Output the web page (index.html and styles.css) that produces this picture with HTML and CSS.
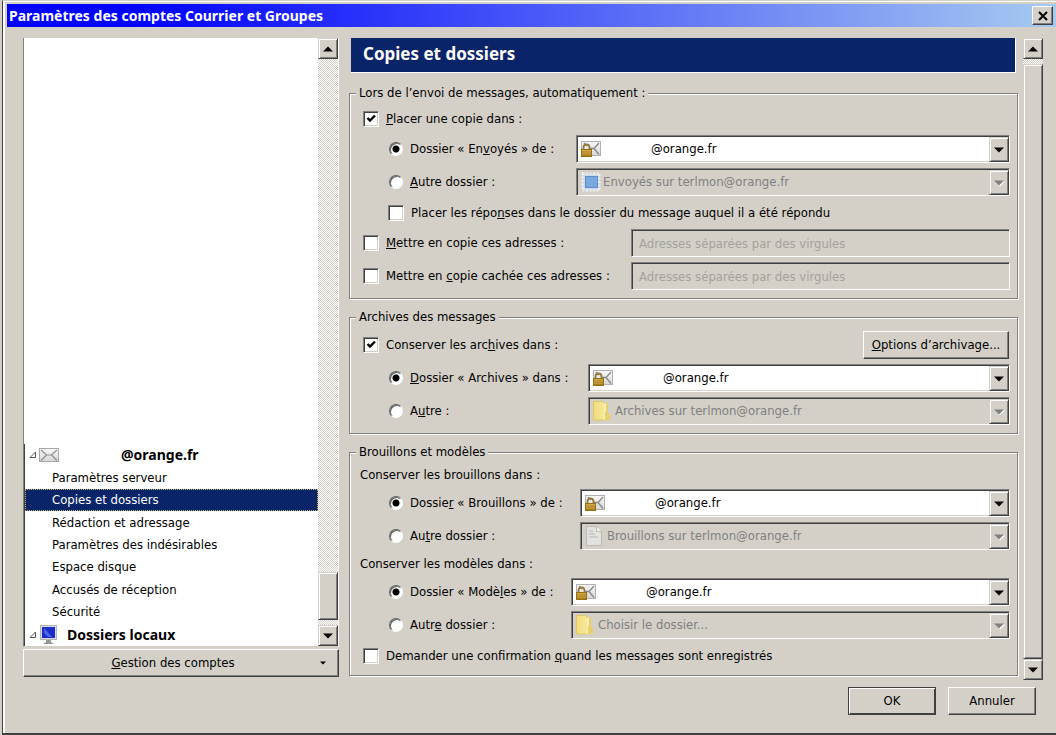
FILE: index.html
```html
<!DOCTYPE html>
<html lang="fr">
<head>
    <meta charset="UTF-8">
    <meta name="viewport" content="width=device-width, initial-scale=1.0">
    <title>Paramètres des comptes Courrier et Groupes</title>
    <link rel="stylesheet" href="styles.css">
</head>
<body>
    <!-- icônes partagées -->
    <svg class="sprite" aria-hidden="true">
        <linearGradient id="paper" x1="0" y1="0" x2="0" y2="1">
            <stop offset="0" stop-color="#f8f8f8"/>
            <stop offset="1" stop-color="#d6d6d6"/>
        </linearGradient>
        <linearGradient id="gold" x1="0" y1="0" x2="0" y2="1">
            <stop offset="0" stop-color="#d8b050"/>
            <stop offset="1" stop-color="#a07418"/>
        </linearGradient>
        <linearGradient id="folder" x1="0" y1="0" x2="1" y2="0">
            <stop offset="0" stop-color="#f0dc7c"/>
            <stop offset="1" stop-color="#f7e89c"/>
        </linearGradient>
        <symbol id="i-mail" viewBox="0 0 20 20">
            <rect x="0.5" y="3.5" width="19" height="13" fill="url(#paper)" stroke="#a8a8a8"/>
            <path d="M2 5l5.500 5h5L18 5M2 15.500l5.500-5.500M18 15.500L12.500 10" fill="none" stroke="#909090" stroke-width="1.200"/>
        </symbol>
        <symbol id="i-lock" viewBox="0 0 20 20">
            <rect x="0.500" y="2.500" width="19" height="14" fill="url(#paper)" stroke="#b0b0b0"/>
            <path d="M18 4l-5 5.500 5 6M13 9.500H9M3 4l3 3" fill="none" stroke="#888" stroke-width="1.300"/>
            <path d="M2.500 11V8.500a3 3 0 0 1 6 0V11" fill="none" stroke="#94783c" stroke-width="1.800"/>
            <rect x="0.500" y="10.500" width="10" height="7" fill="url(#gold)" stroke="#94700f"/>
            <path d="M1 12.500h9M1 15.500h9" stroke="#c0943a"/>
        </symbol>
        <symbol id="i-stamp" viewBox="0 0 20 20">
            <rect x="1.500" y="1.500" width="17" height="17" fill="#d5dbe2" stroke="#eef0f2" stroke-width="2" stroke-dasharray="2 1.500"/>
            <rect x="4.500" y="4.500" width="12" height="11" fill="#79a8df" stroke="#5b8fd0"/>
        </symbol>
        <symbol id="i-folder" viewBox="0 0 20 20">
            <path d="M11 2h4v9l2 3v5h-6z" fill="#e8d06a"/>
            <path d="M0.500 0.500h9l2 2V19h-11z" fill="url(#folder)" stroke="#e0c864"/>
            <path d="M12.500 2v9M11.500 3v16" stroke="#f8eeb0"/>
        </symbol>
        <symbol id="i-page" viewBox="0 0 20 20">
            <path d="M1.500 0.500h10l5 5v14h-15z" fill="#e3e2df" stroke="#bcbab6"/>
            <path d="M11.500 0.500v5h5" fill="#f3f3f1" stroke="#bcbab6"/>
            <path d="M4 5h4M4 8h6M4 11h9" stroke="#b8b6b2"/>
        </symbol>
        <symbol id="i-screen" viewBox="0 0 20 20">
            <rect x="1.500" y="0.500" width="16" height="14" fill="#d8dce4" stroke="#b0b4bc"/>
            <rect x="3" y="2" width="13" height="11" fill="#1c2cc8"/>
            <path d="M5 3l8 9h-4L5 8z" fill="#4c66e8"/>
            <path d="M7 15h5v2l3 2H4l3-2z" fill="#94989e"/>
        </symbol>
        <symbol id="i-twisty" viewBox="0 0 8 8">
            <path d="M6.500 1v5.500H1z" fill="none" stroke="#555"/>
        </symbol>
        <symbol id="i-up" viewBox="0 0 10 6"><path d="M0 5.500h10L5 0.500z"/></symbol>
        <symbol id="i-down" viewBox="0 0 10 6"><path d="M0 0.500h10L5 5.500z"/></symbol>
    </svg>

    <div class="dialog">
        <header class="titlebar">
            <h1>Paramètres des comptes Courrier et Groupes</h1>
            <button class="close" aria-label="Fermer">
                <svg viewBox="0 0 10 10"><path d="M1 1l8 8M9 1L1 9" stroke="#000" stroke-width="2"/></svg>
            </button>
        </header>

        <main class="content">
            <aside class="accounts">
                <div class="tree-box">
                    <ul class="tree">
                        <li class="account">
                            <svg class="twisty"><use href="#i-twisty"/></svg>
                            <svg class="icon"><use href="#i-mail"/></svg>
                            <span class="address">@orange.fr</span>
                        </li>
                        <li>Paramètres serveur</li>
                        <li class="selected">Copies et dossiers</li>
                        <li>Rédaction et adressage</li>
                        <li>Paramètres des indésirables</li>
                        <li>Espace disque</li>
                        <li>Accusés de réception</li>
                        <li>Sécurité</li>
                        <li class="account">
                            <svg class="twisty"><use href="#i-twisty"/></svg>
                            <svg class="icon"><use href="#i-screen"/></svg>
                            <span class="local">Dossiers locaux</span>
                        </li>
                    </ul>
                    <div class="scrollbar">
                        <button class="arrow" aria-label="Haut"><svg><use href="#i-up"/></svg></button>
                        <div class="track"></div>
                        <div class="thumb"></div>
                        <div class="track-end"></div>
                        <button class="arrow" aria-label="Bas"><svg><use href="#i-down"/></svg></button>
                    </div>
                </div>
                <button class="btn manage"><span><u>G</u>estion des comptes</span><svg class="caret"><use href="#i-down"/></svg></button>
            </aside>

            <section class="pane">
                <div class="settings">
                    <h2>Copies et dossiers</h2>

                    <fieldset>
                        <legend>Lors de l’envoi de messages, automatiquement :</legend>
                        <label class="check"><input type="checkbox" checked><span><u>P</u>lacer une copie dans :</span></label>
                        <div class="choices sent">
                            <label class="radio"><input type="radio" name="sent" checked><span>Dossier « En<u>v</u>oyés » de :</span></label>
                            <div class="combo">
                                <svg class="icon"><use href="#i-lock"/></svg>
                                <select aria-label="Compte des envoyés"><option>@orange.fr</option></select>
                                <span class="drop"><svg><use href="#i-down"/></svg></span>
                            </div>
                            <label class="radio"><input type="radio" name="sent"><span><u>A</u>utre dossier :</span></label>
                            <div class="combo off">
                                <svg class="icon"><use href="#i-stamp"/></svg>
                                <select aria-label="Dossier des envoyés" disabled><option>Envoyés sur terlmon@orange.fr</option></select>
                                <span class="drop"><svg><use href="#i-down"/></svg></span>
                            </div>
                        </div>
                        <label class="check nested"><input type="checkbox"><span>Placer les répo<u>n</u>ses dans le dossier du message auquel il a été répondu</span></label>
                        <div class="copies">
                            <label class="check"><input type="checkbox"><span><u>M</u>ettre en copie ces adresses :</span></label>
                            <input class="field" type="text" aria-label="Adresses en copie" placeholder="Adresses séparées par des virgules" disabled>
                            <label class="check"><input type="checkbox"><span>Mettre en <u>c</u>opie cachée ces adresses :</span></label>
                            <input class="field" type="text" aria-label="Adresses en copie cachée" placeholder="Adresses séparées par des virgules" disabled>
                        </div>
                    </fieldset>

                    <fieldset>
                        <legend>Archives des messages</legend>
                        <div class="split">
                            <label class="check"><input type="checkbox" checked><span>Conserver les arc<u>h</u>ives dans :</span></label>
                            <button class="btn options"><span><u>O</u>ptions d’archivage...</span></button>
                        </div>
                        <div class="choices archive">
                            <label class="radio"><input type="radio" name="archive" checked><span><u>D</u>ossier « Archives » dans :</span></label>
                            <div class="combo">
                                <svg class="icon"><use href="#i-lock"/></svg>
                                <select aria-label="Compte des archives"><option>@orange.fr</option></select>
                                <span class="drop"><svg><use href="#i-down"/></svg></span>
                            </div>
                            <label class="radio"><input type="radio" name="archive"><span>A<u>u</u>tre :</span></label>
                            <div class="combo off">
                                <svg class="icon"><use href="#i-folder"/></svg>
                                <select aria-label="Dossier des archives" disabled><option>Archives sur terlmon@orange.fr</option></select>
                                <span class="drop"><svg><use href="#i-down"/></svg></span>
                            </div>
                        </div>
                    </fieldset>

                    <fieldset>
                        <legend>Brouillons et modèles</legend>
                        <p>Conserver les brouillons dans :</p>
                        <div class="choices drafts">
                            <label class="radio"><input type="radio" name="drafts" checked><span>Dossie<u>r</u> « Brouillons » de :</span></label>
                            <div class="combo">
                                <svg class="icon"><use href="#i-lock"/></svg>
                                <select aria-label="Compte des brouillons"><option>@orange.fr</option></select>
                                <span class="drop"><svg><use href="#i-down"/></svg></span>
                            </div>
                            <label class="radio"><input type="radio" name="drafts"><span>Au<u>t</u>re dossier :</span></label>
                            <div class="combo off">
                                <svg class="icon"><use href="#i-page"/></svg>
                                <select aria-label="Dossier des brouillons" disabled><option>Brouillons sur terlmon@orange.fr</option></select>
                                <span class="drop"><svg><use href="#i-down"/></svg></span>
                            </div>
                        </div>
                        <p>Conserver les modèles dans :</p>
                        <div class="choices templates">
                            <label class="radio"><input type="radio" name="templates" checked><span>Dossier « Modè<u>l</u>es » de :</span></label>
                            <div class="combo">
                                <svg class="icon"><use href="#i-lock"/></svg>
                                <select aria-label="Compte des modèles"><option>@orange.fr</option></select>
                                <span class="drop"><svg><use href="#i-down"/></svg></span>
                            </div>
                            <label class="radio"><input type="radio" name="templates"><span>Autr<u>e</u> dossier :</span></label>
                            <div class="combo off">
                                <svg class="icon"><use href="#i-folder"/></svg>
                                <select aria-label="Dossier des modèles" disabled><option>Choisir le dossier...</option></select>
                                <span class="drop"><svg><use href="#i-down"/></svg></span>
                            </div>
                        </div>
                        <label class="check"><input type="checkbox"><span>Demander une confirmation <u>q</u>uand les messages sont enregistrés</span></label>
                    </fieldset>
                </div>
                <div class="scrollbar">
                    <button class="arrow" aria-label="Haut"><svg><use href="#i-up"/></svg></button>
                    <div class="track-end"></div>
                    <div class="thumb full"></div>
                    <button class="arrow" aria-label="Bas"><svg><use href="#i-down"/></svg></button>
                </div>
            </section>
        </main>

        <footer class="actions">
            <button class="btn default">OK</button>
            <button class="btn">Annuler</button>
        </footer>
    </div>
</body>
</html>
```
FILE: styles.css
```css
* {
    box-sizing: border-box;
}

body {
    margin: 0;
    background: #d4d0c8;
    color: #000;
    font-family: "DejaVu Sans Condensed", "Noto Sans", sans-serif;
    font-size: 13px;
    line-height: 18px;
}

button, input, select {
    font: inherit;
    color: inherit;
    margin: 0;
}

.sprite {
    position: absolute;
    width: 0;
    height: 0;
}

.dialog {
    display: flex;
    flex-direction: column;
    min-height: 100vh;
    margin-left: 2px;
    padding: 3px 0 16px 3px;
    border: solid #404040;
    border-width: 0 0 2px 1px;
    border-top: 1px solid #d4d0c8;
    box-shadow: inset 2px 1px #fff;
}

/* barre de titre */
.titlebar {
    display: flex;
    align-items: center;
    height: 23px;
    margin-left: 1px;
    padding: 0 3px 0 2px;
    background: linear-gradient(to right, #0000ff 12%, #a6caf0);
    color: #fff;
}

h1, h2, .account {
    font-family: "Noto Sans", sans-serif;
    font-weight: bold;
}

.titlebar h1 {
    flex: 1;
    margin: 0;
    font-size: 14px;
}

.close {
    width: 21px;
    height: 19px;
    padding: 0;
    display: flex;
    align-items: center;
    justify-content: center;
    background: #d4d0c8;
    border: 1px solid;
    border-color: #fff #404040 #404040 #fff;
    box-shadow: inset -1px -1px #808080;
}

.close svg {
    width: 10px;
    height: 10px;
}

.content {
    display: flex;
    gap: 10px;
    padding: 11px 13px 0 17px;
}

/* liste des comptes */
.accounts {
    display: flex;
    flex-direction: column;
    gap: 2px;
    flex: 0 0 316px;
    padding-bottom: 3px;
}

.tree-box {
    flex: 1;
    display: flex;
    background: #fff;
    border-left: 1px solid #808080;
    border-right: 1px solid #fff;
    border-bottom: 1px solid #d4d0c8;
}

.tree {
    flex: 1;
    align-self: flex-end;
    display: flex;
    flex-direction: column;
    height: 202px;
    margin: 0;
    padding: 0;
    list-style: none;
    border-left: 1px solid #404040;
}

.tree li {
    flex: 1;
    display: flex;
    align-items: center;
    padding-left: 27px;
}

.tree .account {
    padding-left: 4px;
    font-size: 14px;
}

.tree .selected {
    background: #0a246a;
    color: #fff;
    outline: 1px dotted #c8b46c;
    outline-offset: -1px;
}

.twisty {
    width: 8px;
    height: 8px;
    margin-right: 2px;
}

.icon {
    flex: none;
    width: 20px;
    height: 20px;
}

.address {
    margin-left: 62px;
}

.local {
    margin-left: 8px;
}

.manage {
    position: relative;
}

.manage span {
    padding-right: 16px;
}

.caret {
    position: absolute;
    right: 12px;
    top: 11px;
    width: 6px;
    height: 4px;
}

/* barres de défilement */
.scrollbar {
    display: flex;
    flex-direction: column;
    flex: none;
    width: 20px;
    background: repeating-conic-gradient(#fff 0 25%, #d4d0c8 0 50%) 0 0 / 2px 2px;
}

.arrow, .drop, .thumb {
    flex: none;
    background: #d4d0c8;
    border: 1px solid;
    border-color: #d4d0c8 #404040 #404040 #d4d0c8;
    box-shadow: inset 1px 1px #fff, inset -1px -1px #808080;
}

.arrow {
    display: flex;
    align-items: center;
    justify-content: center;
    height: 21px;
    padding: 0;
}

.arrow svg, .drop svg {
    width: 10px;
    height: 6px;
}

.track {
    flex: 1;
}

.thumb {
    height: 48px;
}

.thumb.full {
    flex: 1;
}

.track-end {
    height: 5px;
}

/* panneau de droite */
.pane {
    flex: 1;
    display: flex;
    gap: 5px;
    min-width: 0;
}

.settings {
    flex: 1;
    min-width: 0;
    padding-bottom: 4px;
}

.settings h2 {
    margin: 0 2px 11px;
    padding: 5px 12px 7px;
    border: solid #fff;
    border-width: 0 1px 1px 0;
    background: #0a246a;
    color: #fff;
    font-size: 17px;
    line-height: 22px;
}

fieldset {
    display: flex;
    flex-direction: column;
    gap: 5px;
    min-width: 0;
    margin: 0 0 9px;
    padding: 5px 7px 8px;
    border: 1px solid #808080;
    box-shadow: inset 1px 1px #fff, 1px 1px #fff;
}

fieldset:last-child {
    margin-bottom: 0;
}

legend {
    margin-left: -1px;
    padding: 0 3px;
    background: #d4d0c8;
}

fieldset p {
    margin: 0 3px;
}

.check, .radio {
    display: flex;
    align-items: center;
    gap: 7px;
    min-height: 23px;
    padding-left: 6px;
    white-space: nowrap;
}

.check.nested {
    padding-left: 31px;
}

.radio {
    padding-left: 32px;
}

.check input {
    appearance: none;
    flex: none;
    width: 16px;
    height: 16px;
    background: #fff;
    border: 1px solid;
    border-color: #808080 #fff #fff #808080;
    box-shadow: inset 1px 1px #404040, inset -1px -1px #d4d0c8;
}

.check input:checked {
    background: #fff url("data:image/svg+xml,%3Csvg xmlns='http://www.w3.org/2000/svg' viewBox='0 0 14 14'%3E%3Cpath d='M3.500 6l2.500 2.500 5-5' fill='none' stroke='%23000' stroke-width='2.400'/%3E%3C/svg%3E") center / 14px 14px no-repeat;
}

.radio input {
    appearance: none;
    flex: none;
    width: 14px;
    height: 14px;
    border: 1px solid;
    border-color: #606060 #fff #fff #606060;
    border-radius: 50%;
    background: #fff;
    box-shadow: inset 1px 1px #606060;
}

.radio input:checked {
    background: radial-gradient(circle, #000 3px, #fff 4px);
}

.choices, .copies {
    display: grid;
    gap: 5px 14px;
}

.sent {
    grid-template-columns: 205px 1fr;
}

.archive {
    grid-template-columns: 217px 1fr;
}

.drafts {
    grid-template-columns: 209px 1fr;
}

.templates {
    grid-template-columns: 200px 1fr;
}

.copies {
    grid-template-columns: 260px 1fr;
}

.combo {
    display: flex;
    align-items: center;
    height: 28px;
    min-width: 0;
    padding-left: 4px;
    background: #fff;
    border: 1px solid;
    border-color: #808080 #fff #fff #808080;
    box-shadow: inset 1px 1px #404040, inset -1px -1px #d4d0c8;
}

.combo select {
    appearance: none;
    flex: 1;
    min-width: 0;
    height: 24px;
    padding: 0 0 0 50px;
    border: 0;
    background: transparent;
}

.combo.off {
    background: #d4d0c8;
}

.combo.off select {
    padding-left: 2px;
    color: #808080;
    opacity: 1;
}

.drop {
    display: flex;
    align-items: center;
    justify-content: center;
    width: 20px;
    height: 25px;
    margin-top: 1px;
}

.off .drop svg {
    fill: #808080;
    filter: drop-shadow(1px 1px 0 #fff);
}

.field {
    height: 28px;
    width: 100%;
    padding: 0 7px;
    background: #d4d0c8;
    border: 1px solid;
    border-color: #808080 #fff #fff #808080;
    box-shadow: inset 1px 1px #404040;
}

.field::placeholder {
    color: #a5a29c;
    opacity: 1;
}

.split {
    display: flex;
    justify-content: space-between;
}

.btn {
    height: 28px;
    padding: 0 5px;
    background: #d4d0c8;
    border: 1px solid;
    border-color: #fff #404040 #404040 #fff;
    box-shadow: inset -1px -1px #808080;
}

.options {
    min-width: 146px;
    margin-right: 1px;
}

.actions {
    display: flex;
    justify-content: flex-end;
    gap: 12px;
    padding: 7px 20px 0 0;
}

.actions .btn {
    width: 88px;
}

.actions .default {
    border-color: #404040;
    box-shadow: inset 1px 1px #fff, inset -1px -1px #404040;
}
```
